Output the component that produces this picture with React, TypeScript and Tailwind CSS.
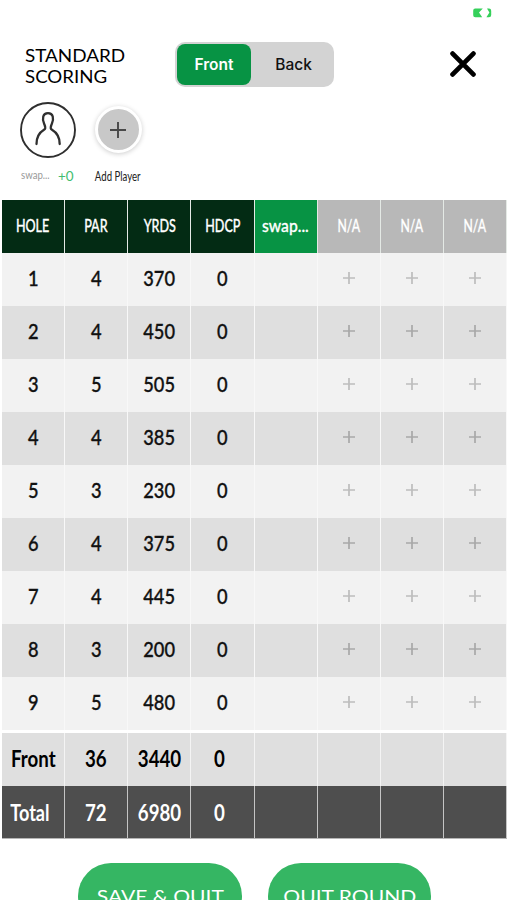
import { useState } from 'react';
import clsx from 'clsx';

const holes = [
  { hole: 1, par: 4, yards: 370, hdcp: 0 },
  { hole: 2, par: 4, yards: 450, hdcp: 0 },
  { hole: 3, par: 5, yards: 505, hdcp: 0 },
  { hole: 4, par: 4, yards: 385, hdcp: 0 },
  { hole: 5, par: 3, yards: 230, hdcp: 0 },
  { hole: 6, par: 4, yards: 375, hdcp: 0 },
  { hole: 7, par: 4, yards: 445, hdcp: 0 },
  { hole: 8, par: 3, yards: 200, hdcp: 0 },
  { hole: 9, par: 5, yards: 480, hdcp: 0 },
];

const rowClass = "grid grid-cols-8 h-[53px]";
const cellClass = "flex items-center justify-center border-r";
const buttonClass = "h-[66px] rounded-[33px] bg-[#35b663] text-white text-[18px] flex items-center justify-center";

function Plus({ className }: { className: string }) {
  return (
    <svg viewBox="0 0 16 16" className={className} stroke="currentColor" fill="none">
      <path d="M8 0v16M0 8h16" />
    </svg>
  );
}

function Battery() {
  return (
    <svg viewBox="0 0 19 10" className="w-[19px] h-[10px]" fill="#35d05a">
      <path d="M2.2 0.5H9.8L6 4.4L9.2 9.2H2.2Q0.2 9.2 0.2 7.2V2.5Q0.2 0.5 2.2 0.5Z" />
      <path d="M14 0.5H16Q18.2 0.5 18.2 2.7V7Q18.2 9.2 16 9.2H13.4L16.4 4.4Z" />
    </svg>
  );
}

function Summary({ label, values, dark }: { label: string; values: number[]; dark?: boolean }) {
  return (
    <div className={clsx(rowClass, "text-[22px] font-bold", dark ? "bg-[#4e4e4e] text-white border-b border-[#b5b5b5]" : "bg-[#dfdfdf] text-black")}>
      {[label, ...values, '', '', '', ''].map((v, i) => (
        <div key={i} className={clsx(cellClass, dark ? "border-[#c4c4c4]" : "pb-[2px] border-[#f4f4f4]", (i === 3 || (dark && i === 0)) && "pr-[7px]")}>
          <span className={clsx("inline-block", i === 0 && dark ? "scale-x-[0.82]" : "scale-x-[0.85]")}>{v}</span>
        </div>
      ))}
    </div>
  );
}

export default function App() {
  const [side, setSide] = useState('Front');

  return (
    <div className="w-[507px] h-[900px] overflow-hidden bg-white font-['Lato',sans-serif]">
      {/* Status bar */}
      <div className="h-[42px] pt-[8px] pr-[15px] flex justify-end">
        <Battery />
      </div>

      {/* Header */}
      <div className="h-[45px] flex items-start">
        <h1 className="w-[175px] pl-[25px] pt-[4px] text-[17px] leading-[20.5px] font-normal text-black">
          <span className="block w-fit origin-left scale-x-[1.11]">STANDARD</span>
          <span className="block w-fit origin-left scale-x-[1.1]">SCORING</span>
        </h1>
        <div className="w-[159px] h-[45px] p-[2px] flex rounded-[10px] bg-[#d3d3d3] font-['Inter',sans-serif] text-[15.5px]">
          {['Front', 'Back'].map(s => (
            <button key={s} onClick={() => setSide(s)}
              className={clsx("h-[41px] rounded-[8px]", side === s ? "w-[74px] bg-[#079344] text-white font-semibold" : "flex-1 pl-[4px] text-[#111111] font-medium")}>
              {s}
            </button>
          ))}
        </div>
        <button className="ml-[116px] mt-[9px]" aria-label="Close">
          <svg viewBox="0 0 26 26" className="w-[26px] h-[26px]" stroke="#000" strokeWidth="4.8" strokeLinecap="round">
            <path d="M2.6 2.6L23.4 23.4M23.4 2.6L2.6 23.4" />
          </svg>
        </button>
      </div>

      {/* Players */}
      <div className="h-[113px] pt-[15px] pl-[20px] flex">
        <div className="w-[56px]">
          <svg viewBox="0 0 56 56" className="w-[56px] h-[56px]" fill="none" stroke="#2f2f2f" strokeLinecap="round">
            <circle cx="28" cy="28" r="27" strokeWidth="1.9" />
            <path d="M16.5 42C16.5 34 19.5 30.5 24 27.8C26.5 26.3 25.3 24.5 24.2 22C21.8 16.5 22.8 11.2 28 11.2C33.2 11.2 34.2 16.5 31.8 22C30.7 24.5 29.5 26.3 32 27.8C36.5 30.5 39.7 34 39.7 42" strokeWidth="2.3" />
          </svg>
          <div className="mt-[9px] h-[16px] flex items-center whitespace-nowrap">
            <span className="w-[38px] pl-px text-[12px] text-[#999999]"><span className="inline-block origin-left scale-x-[0.8]">swap...</span></span>
            <span className="text-[14px] text-[#42bd70]"><span className="inline-block origin-left scale-x-[0.96]">+0</span></span>
          </div>
        </div>
        <div className="w-[60px] ml-[12px] flex flex-col items-center">
          <button className="mt-[4px] w-[47px] h-[47px] rounded-full border-[3px] border-white bg-[#c8c8c8] shadow-[0_1px_5px_rgba(0,0,0,0.2)] flex items-center justify-center text-[#484848]">
            <Plus className="w-[16px] h-[16px] stroke-[1.9]" />
          </button>
          <span className="mt-[16px] h-[16px] leading-[16px] text-[12.5px] text-[#222222] whitespace-nowrap inline-block scale-x-[0.77]">Add Player</span>
        </div>
      </div>

      {/* Scorecard */}
      <div className="pl-[2px]">
        <div className={clsx(rowClass, "text-[17px] text-white")}>
          {['HOLE', 'PAR', 'YRDS', 'HDCP', 'swap...', 'N/A', 'N/A', 'N/A'].map((h, i) => (
            <div key={i} className={clsx(cellClass, "pb-px border-[#e4e9e5] [-webkit-text-stroke:0.3px]", i < 4 ? "bg-[#032b14]" : i === 4 ? "bg-[#079344]" : "bg-[#b8b8b8]")}>
              <span className={clsx("inline-block font-medium", i === 4 ? "scale-x-[0.92]" : i > 4 ? "scale-x-[0.72]" : "scale-x-[0.74]")}>{h}</span>
            </div>
          ))}
        </div>

        {holes.map((h, i) => (
          <div key={h.hole} className={clsx(rowClass, "text-[22px] text-[#111111] font-medium", i % 2 ? "bg-[#dfdfdf]" : "bg-[#f2f2f2]")}>
            {[h.hole, h.par, h.yards, h.hdcp].map((v, j) => (
              <div key={j} className={clsx(cellClass, "pb-[5px] border-[#f8f8f8] [-webkit-text-stroke:0.35px]")}>
                <span className="inline-block scale-x-[0.83]">{v}</span>
              </div>
            ))}
            <div className={clsx(cellClass, "border-[#f8f8f8]")} />
            {[0, 1, 2].map(n => (
              <button key={n} className={clsx(cellClass, "pb-[3px] border-[#f8f8f8]", i % 2 ? "text-[#a9a9a9]" : "text-[#bdbdbd]")}>
                <Plus className="w-[12px] h-[12px] stroke-[2.3]" />
              </button>
            ))}
          </div>
        ))}

        <div className="h-[3px]" />
        <Summary label="Front" values={[36, 3440, 0]} />
        <Summary label="Total" values={[72, 6980, 0]} dark />
      </div>

      {/* Actions */}
      <div className="pt-[24px] pl-[78px] flex items-start gap-[26px]">
        <button className={clsx(buttonClass, "w-[164px]")}>
          <span className="inline-block whitespace-nowrap scale-x-[1.17]">SAVE &amp; QUIT</span>
        </button>
        <button className={clsx(buttonClass, "w-[163px]")}>
          <span className="inline-block whitespace-nowrap scale-x-[1.17]">QUIT ROUND</span>
        </button>
      </div>
    </div>
  );
}
